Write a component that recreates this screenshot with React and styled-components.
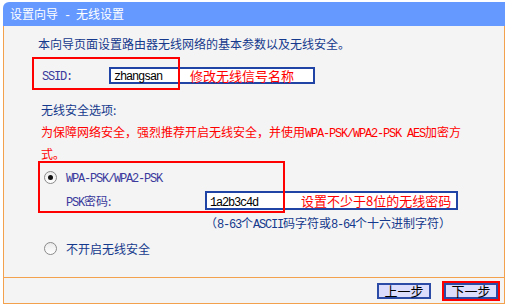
import React from "react";
import styled, { createGlobalStyle } from "styled-components";

const ORANGE = "#f4a14d";
const BLUE_TEXT = "#15398c";
const MONO_TEXT = "#3a3a9c";
const RED = "#ff0000";
const FIELD_BORDER = "#1f44a6";

const GlobalStyle = createGlobalStyle`
	html, body {
		margin: 0;
		padding: 0;
		background: #ffffff;
	}
	body {
		font-family: "Noto Sans CJK SC", "Liberation Sans", sans-serif;
		font-size: 12px;
	}
`;

// ASCII 부분 (SimSun 반각 폭 흉내)
const Asc = styled.span`
	font-family: "Liberation Mono", "DejaVu Sans Mono", monospace;
	font-size: 12px;
	letter-spacing: -1.2px;
	font-weight: ${(p) => (p.$bold ? 700 : 400)};
`;

const Window = styled.div`
	margin: 2px 0 0 3px;
	width: 502px;
`;

const TitleBar = styled.div`
	height: 24px;
	line-height: 24px;
	padding-left: 7px;
	background: #6699ff;
	color: #ffffff;
	font-size: 12px;
	border-radius: 6px 0 0 0;
`;

const Content = styled.div`
	box-sizing: border-box;
	height: 251px;
	padding: 10px 0 0 34px;
	background: #f4f4f4;
	border-left: 1px solid ${ORANGE};
	border-right: 1px solid ${ORANGE};
	color: ${BLUE_TEXT};
`;

const Intro = styled.div`
	line-height: 16px;
`;

// 빨간 주석 테두리
const Framed = styled.div`
	position: relative;

	&::after {
		content: "";
		position: absolute;
		left: 0;
		top: 0;
		bottom: 0;
		width: ${(p) => p.$w}px;
		border: 2px solid ${RED};
		box-sizing: border-box;
		pointer-events: none;
	}
`;

const SsidRow = styled(Framed)`
	display: flex;
	align-items: center;
	box-sizing: border-box;
	height: 33px;
	margin: 5px 0 0 -6px;
	padding: 3px 0 0 10px;
`;

const Label = styled.div`
	width: ${(p) => p.$w}px;
	color: ${MONO_TEXT};
	flex-shrink: 0;
`;

const Field = styled.div`
	display: flex;
	align-items: center;
	box-sizing: border-box;
	width: ${(p) => p.$w}px;
	height: ${(p) => p.$h}px;
	padding-left: 3px;
	background: #ffffff;
	border: 2px solid ${FIELD_BORDER};
	flex-shrink: 0;
`;

const FieldValue = styled.span`
	width: ${(p) => p.$w}px;
	color: #000000;
`;

const Note = styled.span`
	color: ${RED};
	font-size: 13px;
`;

const Heading = styled.div`
	margin-top: 10px;
	padding-left: 3px;
	line-height: 20px;
`;

const Warning = styled.div`
	margin-top: 2px;
	padding-left: 3px;
	line-height: 20px;
	color: ${RED};
`;

const SecurityBox = styled(Framed)`
	margin-top: -3px;
	padding: 8px 0 3px 6px;
`;

const OptionRow = styled.div`
	display: flex;
	align-items: center;
	height: 16px;
	padding-left: ${(p) => p.$pad || 0}px;
	margin-top: ${(p) => p.$mt || 0}px;
`;

const Radio = styled.span`
	position: relative;
	box-sizing: border-box;
	width: 13px;
	height: 13px;
	margin-right: 9px;
	border-radius: 50%;
	border: 1px solid #8a8a8a;
	background: linear-gradient(#eaeaea, #ffffff);
	flex-shrink: 0;

	&::after {
		content: "";
		display: ${(p) => (p.$checked ? "block" : "none")};
		position: absolute;
		left: 3px;
		top: 3px;
		width: 5px;
		height: 5px;
		border-radius: 50%;
		background: #111111;
	}
`;

const OptionText = styled.span`
	color: ${(p) => (p.$mono ? MONO_TEXT : BLUE_TEXT)};
`;

const PskRow = styled.div`
	display: flex;
	align-items: center;
	margin-top: 6px;
	padding-left: 22px;
`;

const Hint = styled.div`
	margin: 2px 0 0 167px;
	line-height: 16px;
`;

const Footer = styled.div`
	display: flex;
	justify-content: flex-end;
	align-items: center;
	gap: 13px;
	height: 25px;
	padding-right: 6px;
	background: #f4f4f4;
	border: 1px solid ${ORANGE};
`;

const StepButton = styled.button`
	box-sizing: border-box;
	width: 54px;
	height: 16px;
	padding: 0;
	background: #dcdcfc;
	border: 2px solid #2c4ba6;
	color: #000000;
	font-family: "Noto Sans CJK SC", sans-serif;
	font-size: 13px;
	line-height: 12px;
	outline: ${(p) => (p.$active ? `2px solid ${RED}` : "none")};
`;

export default function App() {
	return (
		<>
			<GlobalStyle />
			<Window>
				<TitleBar>
					设置向导<Asc> - </Asc>无线设置
				</TitleBar>
				<Content>
					<Intro>本向导页面设置路由器无线网络的基本参数以及无线安全。</Intro>

					<SsidRow $w={148}>
						<Label $w={67}>
							<Asc>SSID:</Asc>
						</Label>
						<Field $w={206} $h={17}>
							<FieldValue $w={76}>
								<Asc>zhangsan</Asc>
							</FieldValue>
							<Note>修改无线信号名称</Note>
						</Field>
					</SsidRow>

					<Heading>无线安全选项:</Heading>
					<Warning>
						为保障网络安全，强烈推荐开启无线安全，并使用
						<Asc>WPA-PSK/WPA2-PSK AES</Asc>加密方
						<br />
						式。
					</Warning>

					<SecurityBox $w={247}>
						<OptionRow>
							<Radio $checked />
							<OptionText $mono>
								<Asc>WPA-PSK/WPA2-PSK</Asc>
							</OptionText>
						</OptionRow>
						<PskRow>
							<Label $w={139}>
								<Asc>PSK</Asc>密码:
							</Label>
							<Field $w={253} $h={19}>
								<FieldValue $w={91}>
									<Asc>1a2b3c4d</Asc>
								</FieldValue>
								<Note>设置不少于8位的无线密码</Note>
							</Field>
						</PskRow>
					</SecurityBox>

					<Hint>
						（<Asc>8-63</Asc>个<Asc>ASCII</Asc>码字符或<Asc>8-64</Asc>个十六进制字符）
					</Hint>

					<OptionRow $pad={6} $mt={7}>
						<Radio />
						<OptionText>不开启无线安全</OptionText>
					</OptionRow>
				</Content>
				<Footer>
					<StepButton>上一步</StepButton>
					<StepButton $active>下一步</StepButton>
				</Footer>
			</Window>
		</>
	);
}
